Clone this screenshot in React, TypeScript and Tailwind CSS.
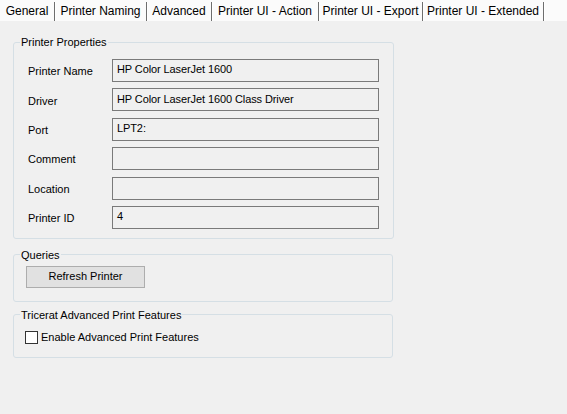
import * as React from "react";

const tabs = [
  { title: "General", width: "w-[55px]" },
  { title: "Printer Naming", width: "w-[92px]" },
  { title: "Advanced", width: "w-[65px]" },
  { title: "Printer UI - Action", width: "w-[107px]" },
  { title: "Printer UI - Export", width: "w-[104px]" },
  { title: "Printer UI - Extended", width: "w-[121px]" },
];

const fields = [
  { label: "Printer Name", value: "HP Color LaserJet 1600" },
  { label: "Driver", value: "HP Color LaserJet 1600 Class Driver" },
  { label: "Port", value: "LPT2:" },
  { label: "Comment", value: "" },
  { label: "Location", value: "" },
  { label: "Printer ID", value: "4" },
];

function GroupBox({
  title,
  outer,
  className,
  children,
}: {
  title: string;
  outer?: string;
  className?: string;
  children: React.ReactNode;
}) {
  return (
    <fieldset className={`w-[380px] rounded-[3px] border border-[#d5dfe5] ${outer ?? ""}`}>
      <legend className="ml-[6px] px-[1px] leading-[14px] text-black">{title}</legend>
      <div className={className}>{children}</div>
    </fieldset>
  );
}

export default function App() {
  return (
    <div className="h-[414px] w-[567px] overflow-hidden bg-[#f0f0f0] font-['Liberation_Sans',Arial,sans-serif] text-[11px] text-black">
      {/* tab strip */}
      <div className="flex h-[21px] bg-[#fbfbfb] text-[12px]">
        {tabs.map((tab) => (
          <div
            key={tab.title}
            className={`flex ${tab.width} items-start justify-center pt-[4px]`}
          >
            <span className="flex-1 whitespace-nowrap text-center leading-[14px]">{tab.title}</span>
            <span className="mt-[-2px] h-[19px] w-[1px] shrink-0 bg-[#6e6e6e] shadow-[1px_0_0_#ffffff]" />
          </div>
        ))}
      </div>

      <div className="flex flex-col pl-[13px] pt-[14px]">
        <GroupBox title="Printer Properties" className="px-[14px] pb-[9px] pt-[10px]">
          <div className="flex flex-col gap-[6.4px]">
            {fields.map((f) => (
              <div key={f.label} className="flex items-center">
                <span className="w-[84px] pt-[2px]">{f.label}</span>
                <div className="flex h-[23px] w-[267px] items-center border border-[#7a7a7a] bg-[#f0f0f0] px-[4px] pb-[2px] tracking-[-0.1px]">
                  {f.value}
                </div>
              </div>
            ))}
          </div>
        </GroupBox>

        <GroupBox title="Queries" outer="mt-[9px]" className="px-[12px] pb-[13px] pt-[4px]">
          <button className="h-[22px] w-[119px] border border-[#adadad] bg-[#e1e1e1] text-[11px] leading-[13px]">
            Refresh Printer
          </button>
        </GroupBox>

        <GroupBox title="Tricerat Advanced Print Features" outer="mt-[6px]" className="px-[11px] pb-[13px] pt-[9px]">
          <label className="flex items-center gap-[3px]">
            <span className="h-[13px] w-[13px] border border-[#333333] bg-white" />
            <span className="leading-[13px]">Enable Advanced Print Features</span>
          </label>
        </GroupBox>
      </div>
    </div>
  );
}
